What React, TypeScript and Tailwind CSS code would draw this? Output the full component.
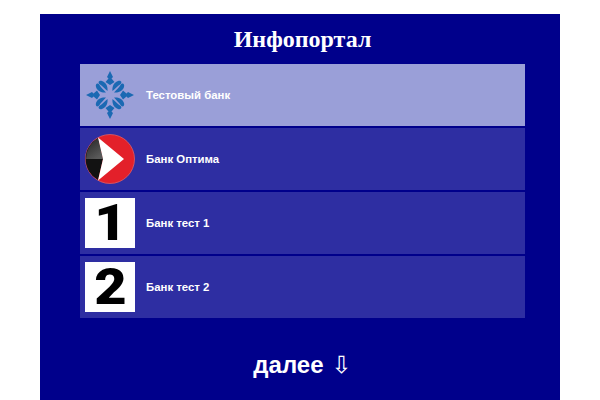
import React from "react";

function StarLogo() {
  const arm = (
    <g fill="#1b69b3">
      <path d="M25 1 L28 7 L26.5 8.5 L29.5 12 L25 15 L20.5 12 L23.5 8.5 L22 7 Z" />
      <path d="M27.5 21 C27 17 28.5 12.5 33 11 C36.5 10 37.5 13 35 14.5 C32.5 16 31 18 27.5 21 Z" />
      <path d="M22.5 21 C23 17 21.5 12.5 17 11 C13.5 10 12.5 13 15 14.5 C17.5 16 19 18 22.5 21 Z" />
    </g>
  );
  return (
    <svg width="50" height="50" viewBox="0 0 50 50">
      {arm}
      <g transform="rotate(90 25 25)">{arm}</g>
      <g transform="rotate(180 25 25)">{arm}</g>
      <g transform="rotate(270 25 25)">{arm}</g>
    </svg>
  );
}

function OptimaLogo() {
  return (
    <svg width="50" height="50" viewBox="0 0 50 50">
      <defs>
        <linearGradient id="g" x1="0" y1="0" x2="0.6" y2="1">
          <stop offset="0" stopColor="#222222" />
          <stop offset="1" stopColor="#5a5a5a" />
        </linearGradient>
      </defs>
      <circle cx="25" cy="25" r="24.5" fill="#e3202a" stroke="#d9606a" strokeWidth="0.8" />
      <path d="M13 4 A24 24 0 0 0 13 46 L18 25 Z" fill="#121212" />
      <path d="M13 4 A24 24 0 0 0 1 25 L18 25 Z" fill="url(#g)" />
      <path d="M13 3.5 L39 25 L13 46.5 L18 25 Z" fill="#ffffff" />
    </svg>
  );
}

function Digit({ n }: { n: string }) {
  return (
    <div className="w-[50px] h-[50px] bg-white flex items-center justify-center text-black font-black text-[50px] leading-[50px] font-['Roboto',sans-serif]">
      <span className="scale-x-[1.12]">{n}</span>
    </div>
  );
}

function Row({ logo, name, active }: { logo: React.ReactNode; name: string; active?: boolean }) {
  return (
    <div className={`h-[62px] flex items-center pl-[5px] gap-[11px] ${active ? "bg-[#9a9fd8]" : "bg-[#2e2ea2]"}`}>
      <div className="w-[50px] h-[50px] shrink-0">{logo}</div>
      <span className="pt-[2px] text-white font-bold text-[11.4px] font-['Liberation_Sans',sans-serif]">{name}</span>
    </div>
  );
}

export default function App() {
  return (
    <div className="w-[600px] h-[400px] overflow-hidden bg-white pt-[14px]">
      <div className="mx-[40px] w-[520px] h-[386px] bg-[#00008b] pl-[40px] pr-[35px] flex flex-col">
        <h1 className="h-[50px] flex items-center justify-center text-white font-bold text-[24px] font-['Liberation_Serif',serif]">
          Инфопортал
        </h1>
        <div className="flex flex-col gap-[2px]">
          <Row logo={<StarLogo />} name="Тестовый банк" active />
          <Row logo={<OptimaLogo />} name="Банк Оптима" />
          <Row logo={<Digit n="1" />} name="Банк тест 1" />
          <Row logo={<Digit n="2" />} name="Банк тест 2" />
        </div>
        <div className="mt-[29px] flex items-center justify-center gap-[8px] text-white font-bold text-[24px] font-['Liberation_Sans',sans-serif]">
          <span>далее</span>
          <span className="font-['DejaVu_Sans',sans-serif] font-normal">⇩</span>
        </div>
      </div>
    </div>
  );
}
